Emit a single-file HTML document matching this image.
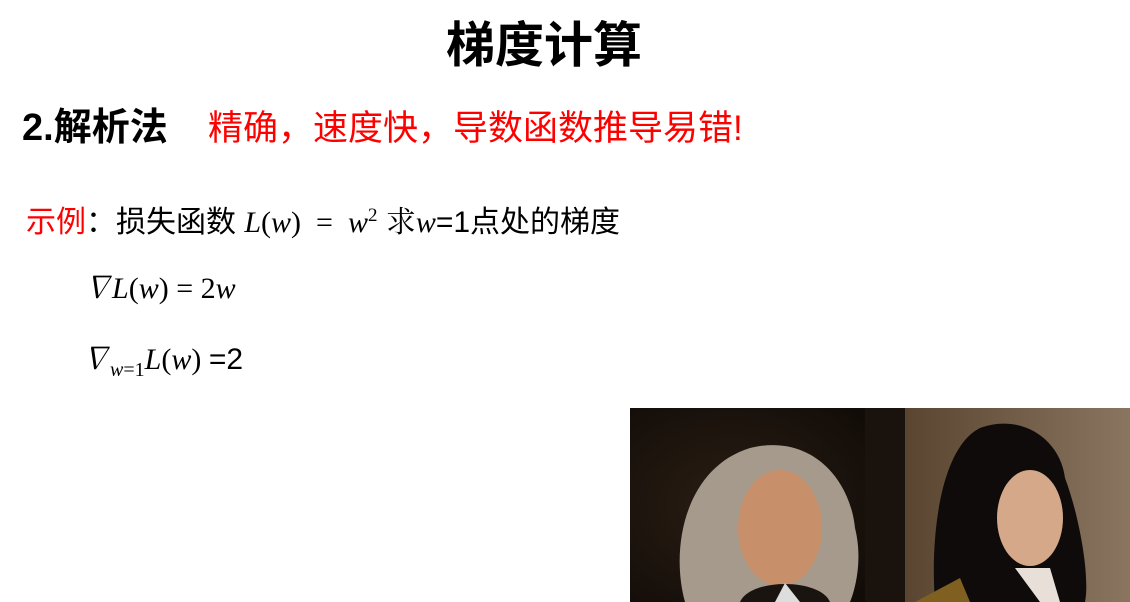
<!DOCTYPE html>
<html><head><meta charset="utf-8"><style>
body{margin:0;width:1130px;height:602px;background:#fff;position:relative;overflow:hidden;font-family:"Liberation Sans","Noto Sans CJK SC",sans-serif;}
.a{position:absolute;white-space:nowrap;line-height:1;}
.m{font-family:"Liberation Serif","Noto Serif CJK SC",serif;font-style:italic;}
.u{font-family:"Liberation Serif",serif;font-style:normal;}
</style></head><body>
<div class="a" style="left:446px;top:22px;font-size:49px;font-weight:bold;">梯度计算</div>
<div class="a" style="left:22px;top:109px;font-size:38px;font-weight:bold;">2.解析法</div>
<div class="a" style="left:208px;top:111px;font-size:35px;color:#f00;">精确，速度快，导数函数推导易错!</div>
<div class="a" style="left:26px;top:204px;font-size:30px;"><span style="color:#f00">示例</span>：损失函数 <span class="m">L</span><span class="u">(</span><span class="m">w</span><span class="u">)&nbsp;&nbsp;=&nbsp;&nbsp;</span><span class="m">w</span><sup class="u" style="font-size:19px">2</sup>&nbsp;<span style="font-family:'Noto Serif CJK SC',serif">求</span><span class="m">w</span>=1点处的梯度</div>
<div class="a m" style="left:82px;top:274px;font-size:30px;">∇L<span class="u">(</span>w<span class="u">)&nbsp;=&nbsp;2</span>w</div>
<div class="a m" style="left:80px;top:345px;font-size:30px;">∇<sub style="font-size:20px">w<span class="u">=1</span></sub>L<span class="u">(</span>w<span class="u">)&nbsp;</span><span style="font-family:'Liberation Sans';font-style:normal">=2</span></div>
<svg class="a" style="left:630px;top:408px" width="500" height="194">
<defs>
<radialGradient id="bg1" cx="0.4" cy="0.5" r="0.7"><stop offset="0" stop-color="#2a1e14"/><stop offset="1" stop-color="#120c08"/></radialGradient>
<linearGradient id="bg2" x1="0" x2="1"><stop offset="0" stop-color="#5a4530"/><stop offset="1" stop-color="#8a7560"/></linearGradient>
</defs>
<rect width="250" height="194" fill="url(#bg1)"/>
<rect x="235" width="40" height="194" fill="#1a120c"/>
<rect x="275" width="225" height="194" fill="url(#bg2)"/>
<path d="M55 194 C40 140 55 60 120 40 C180 25 220 70 225 120 C235 160 220 194 220 194Z" fill="#a59a8c"/>
<ellipse cx="150" cy="120" rx="42" ry="58" fill="#c8906a"/>
<path d="M110 194 C120 170 190 170 200 194Z" fill="#1a1410"/>
<path d="M145 194 L155 175 L170 194Z" fill="#ddd"/>
<path d="M305 194 C300 130 310 40 350 20 C390 5 430 30 435 70 C450 110 460 170 455 194Z" fill="#0e0b0a"/>
<ellipse cx="400" cy="110" rx="33" ry="48" fill="#d4a888"/>
<path d="M385 160 L410 194 L430 194 L420 160Z" fill="#e8e0d8"/>
<path d="M285 194 L330 170 L340 194Z" fill="#806020"/>
</svg>
</body></html>
